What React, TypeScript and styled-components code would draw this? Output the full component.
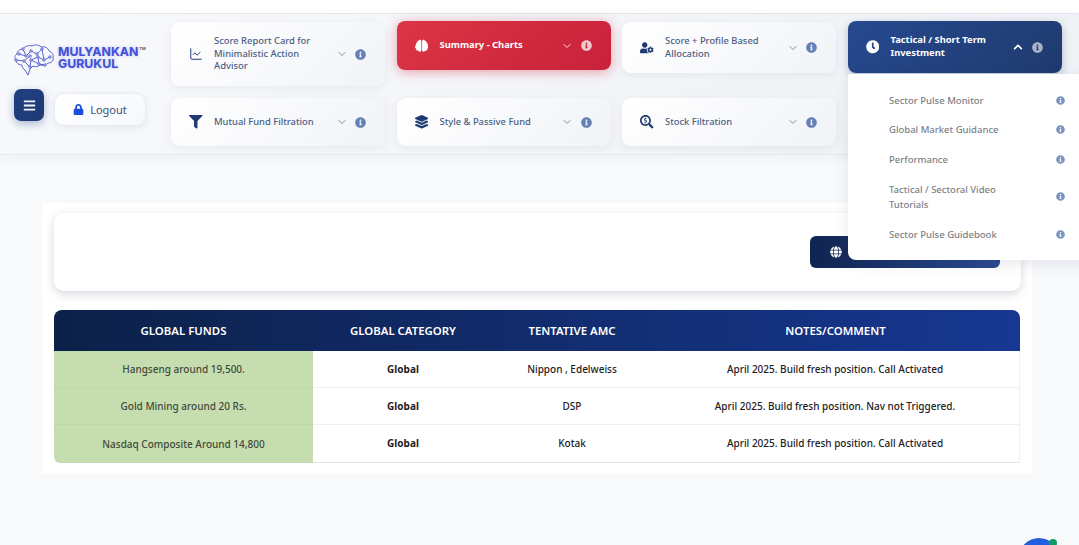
import React from "react";
import styled, { createGlobalStyle } from "styled-components";
import {
  FaBars, FaBrain, FaChevronUp, FaClock, FaFilter, FaGlobe, FaInfoCircle,
  FaLayerGroup, FaLock, FaSearchDollar, FaUserCog,
} from "react-icons/fa";
import { ChevronDown, ChartLine } from "lucide-react";

const Global = createGlobalStyle`
  html, body { margin: 0; padding: 0; height: 545px; overflow: hidden; background: #f8f9fb; }
  body { font-family: "Noto Sans", "Open Sans", sans-serif; }
  * { box-sizing: border-box; }
`;

const Page = styled.div`
  position: relative;
  width: 1079px;
  height: 545px;
  overflow: hidden;
  background: #f8f9fb;
`;
const TopStrip = styled.div`height: 14px; background: #fff; border-bottom: 1px solid #e4e7eb;`;
const Header = styled.header`
  height: 141px;
  padding: 8px 0 0 14px;
  display: flex;
  background: linear-gradient(135deg, #f8f9fc 0%, #eef1f5 100%);
  border-bottom: 1px solid #e6e8ec;
  box-shadow: 0 3px 10px rgba(30, 50, 90, 0.05);
`;
const Brand = styled.div`width: 157px; flex: none; display: flex; flex-direction: column;`;
const Logo = styled.div`display: flex; align-items: center; height: 36px; margin-top: 18px;`;
const LogoText = styled.div`
  margin-left: 2px;
  font-family: Inter, "Noto Sans", sans-serif;
  font-weight: 700;
  font-size: 12.3px;
  line-height: 12.5px;
  color: #4150d8;
  text-shadow: 0 0 3px rgba(65, 80, 216, .35);
`;
const LogoLine = styled.div`display: flex; align-items: flex-start;`;
const Tm = styled.span`
  margin-left: 1px;
  font-size: 4px;
  line-height: 5px;
  color: #555;
  text-shadow: none;
`;
const BrandActions = styled.div`display: flex; align-items: flex-start; gap: 10px; margin-top: 13px;`;
const MenuBtn = styled.button`
  width: 30px;
  height: 32px;
  border: 0;
  padding: 0;
  border-radius: 7px;
  background: linear-gradient(135deg, #1f4083, #1e3a72);
  color: #f2f5fb;
  display: flex;
  align-items: center;
  justify-content: center;
  font-size: 13px;
  box-shadow: 0 3px 8px rgba(30, 60, 130, .35);
`;
const LogoutBtn = styled.button`
  width: 92px;
  height: 33px;
  margin-top: 4px;
  border: 1px solid #e9ecf2;
  border-radius: 10px;
  background: linear-gradient(135deg, #fff, #f6f8fc);
  color: #3c4f77;
  font: 400 11px "Noto Sans", sans-serif;
  display: flex;
  align-items: center;
  justify-content: center;
  gap: 6px;
  box-shadow: 0 2px 6px rgba(30, 50, 90, .08);
  svg { color: #1d4ed8; font-size: 11px; }
`;
const Nav = styled.nav`
  display: grid;
  grid-template-columns: repeat(4, 214px);
  grid-template-rows: 64px 48px;
  column-gap: 11.5px;
  row-gap: 12px;
  align-items: start;
  position: relative;
`;
type Tone = "plain" | "red" | "blue";
const Card = styled.div<{ $tone: Tone; $h: number; $up?: number }>`
  height: ${p => p.$h}px;
  margin-top: ${p => (p.$up ? -p.$up : 0)}px;
  padding: 0 19px 0 18px;
  display: flex;
  align-items: center;
  border-radius: ${p => (p.$tone === "plain" ? 9 : 8)}px;
  font-size: 9.4px;
  line-height: 12.8px;
  background: ${p => p.$tone === "red" ? "linear-gradient(135deg, #dc3545, #c8213a)"
    : p.$tone === "blue" ? "linear-gradient(135deg, #27498f, #1e3a6e)"
    : "linear-gradient(135deg, #ffffff, #f1f3f7)"};
  color: ${p => (p.$tone === "plain" ? "#4a5f85" : "#fff")};
  font-weight: ${p => (p.$tone === "plain" ? 500 : 700)};
  box-shadow: ${p => p.$tone === "red" ? "0 2px 12px rgba(220, 53, 69, .45)"
    : p.$tone === "blue" ? "0 3px 8px rgba(30, 58, 110, .3)"
    : "0 2px 8px rgba(40, 60, 100, .07)"};
`;
const CardIcon = styled.span<{ $tone: Tone }>`
  width: 25px;
  flex: none;
  font-size: 13.5px;
  display: flex;
  color: ${p => (p.$tone === "plain" ? "#1e3a72" : "#fff")};
`;
const CardLabel = styled.span`flex: 1; min-width: 0; padding-right: 4px;`;
const Chevron = styled.span<{ $tone: Tone }>`
  width: 13px;
  margin-right: 7px;
  flex: none;
  display: flex;
  justify-content: center;
  color: ${p => (p.$tone === "plain" ? "#647391" : "#fff")};
`;
const Info = styled.span<{ $tone: Tone }>`
  flex: none;
  display: flex;
  font-size: 11px;
  color: ${p => p.$tone === "plain" ? "#6480b4" : p.$tone === "red" ? "#f4c9cd" : "#a9b4c9"};
`;
const Dropdown = styled.div`
  position: absolute;
  left: 677px;
  top: 52px;
  width: 240px;
  height: 186px;
  padding: 11.5px 0 0;
  background: #fff;
  border-radius: 0 0 0 8px;
  box-shadow: 0 4px 14px rgba(30, 50, 90, .1);
  z-index: 5;
`;
const DropItem = styled.div<{ $tall?: boolean }>`
  height: ${p => (p.$tall ? 45 : 29.6)}px;
  padding: 0 23px 0 41px;
  display: flex;
  align-items: center;
  font-size: 9.5px;
  line-height: 15px;
  color: #7b7f88;
  font-weight: 500;
`;
const DropLabel = styled.span`flex: 1; max-width: 135px; margin-right: auto;`;
const DropInfo = styled.span`
  display: flex;
  font-size: 9px;
  color: #7c94c0;
`;
const Main = styled.main`
  width: 990px;
  height: 271px;
  margin: 48px 0 0 42px;
  padding: 10px 11px 0 12px;
  background: #fff;
`;
const Toolbar = styled.div`
  height: 78px;
  border-radius: 10px;
  background: #fff;
  box-shadow: 0 3px 10px rgba(30, 40, 70, .18);
  display: flex;
  justify-content: flex-end;
  align-items: center;
  padding: 0 21px 0 0;
  margin-bottom: 19px;
`;
const GlobalBtn = styled.button`
  width: 190px;
  height: 32px;
  border: 0;
  border-radius: 6px;
  background: linear-gradient(90deg, #0f2450, #2c4a94);
  color: #fff;
  display: flex;
  align-items: center;
  padding: 0 0 0 20px;
  font-size: 12px;
`;
const TableWrap = styled.table`
  width: 966px;
  border-collapse: separate;
  border-spacing: 0;
  table-layout: fixed;
  font-size: 10px;
`;
const Head = styled.thead`
  tr { background: linear-gradient(90deg, #0c2148, #173792); }
`;
const Th = styled.th<{ $w: number }>`
  width: ${p => p.$w}px;
  height: 41px;
  padding: 0;
  color: #fff;
  font-size: 11.4px;
  font-weight: 600;
  text-align: center;
  &:first-child { border-top-left-radius: 8px; }
  &:last-child { border-top-right-radius: 8px; }
`;
const Row = styled.tr<{ $h: number }>`height: ${p => p.$h}px;`;
const Fund = styled.td`
  padding: 0;
  text-align: center;
  background: #c6deaf;
  color: #3f4a3c;
  font-weight: 500;
  border-bottom: 1px solid #bdd6a6;
  tr:last-child & { border-bottom: 0; border-bottom-left-radius: 6px; padding-bottom: 1px; }
`;
const Cell = styled.td<{ $bold?: boolean }>`
  padding: 0;
  text-align: center;
  color: #1f2126;
  font-weight: ${p => (p.$bold ? 700 : 500)};
  border-bottom: 1px solid #eef0f3;
  tr:last-child & { border-bottom-color: #e3e5ea; padding-bottom: 1px; }
  &:last-child { border-right: 1px solid #eef0f3; }
`;
const Chat = styled.div`
  position: absolute;
  left: 1019px;
  top: 538px;
  width: 40px;
  height: 40px;
  border-radius: 50%;
  background: #1f5fe0;
`;
const ChatDot = styled.div`
  position: absolute;
  left: 30px;
  top: 1px;
  width: 8px;
  height: 8px;
  border-radius: 50%;
  background: #129a63;
`;

const BrainLogo = () => (
  <svg width="42" height="33" viewBox="0 0 42 33" fill="none" stroke="#4a55c8" strokeWidth="0.9">
    <path d="M8 23c-3 0-6-2-6-5-2-2-1-5 1-6 0-3 3-5 6-5 2-3 6-4 9-3 3-2 7-1 9 1 4-1 7 1 8 4 3 1 5 4 4 7 1 3-2 5-5 5-2 2-5 3-8 2-2 2-5 2-7 1l-3 3-2 6-3-5c-2-1-3-3-3-5z" />
    <path d="M5 12l7 2 5-5 6 3 5-5M2 18l8 1 6-5M10 19l6 6M16 25l1-7 7-3 6 3 6-3M24 15l1 7 6 1M17 18l8 4M9 7l3 7M28 7l2 11" />
    {[[5,12],[12,14],[17,9],[23,12],[28,7],[2,18],[10,19],[16,14],[16,25],[17,18],[24,15],[30,18],[36,15],[25,22],[31,23],[9,7]].map(([x,y]) => (
      <circle key={`${x}-${y}`} cx={x} cy={y} r="1.2" fill="#f4f6fa" />
    ))}
  </svg>
);

const rowOne = [
  { icon: <ChartLine size={14} strokeWidth={1.7} />, label: "Score Report Card for Minimalistic Action Advisor", tone: "plain" as Tone, h: 64 },
  { icon: <FaBrain />, label: "Summary - Charts", tone: "red" as Tone, h: 49, up: 1 },
  { icon: <FaUserCog />, label: "Score + Profile Based Allocation", tone: "plain" as Tone, h: 51 },
  { icon: <FaClock />, label: "Tactical / Short Term Investment", tone: "blue" as Tone, h: 52, up: 1, open: true },
];
const rowTwo = [
  { icon: <FaFilter />, label: "Mutual Fund Filtration", tone: "plain" as Tone, h: 48 },
  { icon: <FaLayerGroup />, label: "Style & Passive Fund", tone: "plain" as Tone, h: 48 },
  { icon: <FaSearchDollar />, label: "Stock Filtration", tone: "plain" as Tone, h: 48 },
];
const menu = [
  { label: "Sector Pulse Monitor" },
  { label: "Global Market Guidance" },
  { label: "Performance" },
  { label: "Tactical / Sectoral Video Tutorials", tall: true },
  { label: "Sector Pulse Guidebook" },
];
const rows = [
  { fund: "Hangseng around 19,500.", amc: "Nippon , Edelweiss", note: "April 2025. Build fresh position. Call Activated", h: 37 },
  { fund: "Gold Mining around 20 Rs.", amc: "DSP", note: "April 2025. Build fresh position. Nav not Triggered.", h: 37 },
  { fund: "Nasdaq Composite Around 14,800", amc: "Kotak", note: "April 2025. Build fresh position. Call Activated", h: 38 },
];

type NavItem = { icon: React.ReactNode; label: string; tone: Tone; h: number; up?: number; open?: boolean };
const NavCard = ({ item }: { item: NavItem }) => (
  <Card $tone={item.tone} $h={item.h} $up={item.up}>
    <CardIcon $tone={item.tone}>{item.icon}</CardIcon>
    <CardLabel>{item.label}</CardLabel>
    <Chevron $tone={item.tone}>
      {item.open ? <FaChevronUp size={10} /> : <ChevronDown size={12} strokeWidth={1.6} />}
    </Chevron>
    <Info $tone={item.tone}><FaInfoCircle /></Info>
  </Card>
);

export default function App() {
  return (
    <Page>
      <Global />
      <TopStrip />
      <Header>
        <Brand>
          <Logo>
            <BrainLogo />
            <LogoText>
              <LogoLine>MULYANKAN<Tm>TM</Tm></LogoLine>
              <LogoLine>GURUKUL</LogoLine>
            </LogoText>
          </Logo>
          <BrandActions>
            <MenuBtn aria-label="Menu"><FaBars /></MenuBtn>
            <LogoutBtn><FaLock />Logout</LogoutBtn>
          </BrandActions>
        </Brand>
        <Nav>
          {rowOne.map(i => <NavCard key={i.label} item={i} />)}
          {rowTwo.map(i => <NavCard key={i.label} item={i} />)}
          <Dropdown>
            {menu.map(m => (
              <DropItem key={m.label} $tall={m.tall}>
                <DropLabel>{m.label}</DropLabel>
                <DropInfo><FaInfoCircle /></DropInfo>
              </DropItem>
            ))}
          </Dropdown>
        </Nav>
      </Header>
      <Main>
        <Toolbar>
          <GlobalBtn aria-label="Global"><FaGlobe /></GlobalBtn>
        </Toolbar>
        <TableWrap>
          <Head>
            <tr>
              <Th $w={259}>GLOBAL FUNDS</Th>
              <Th $w={180}>GLOBAL CATEGORY</Th>
              <Th $w={158}>TENTATIVE AMC</Th>
              <Th $w={369}>NOTES/COMMENT</Th>
            </tr>
          </Head>
          <tbody>
            {rows.map(r => (
              <Row key={r.fund} $h={r.h}>
                <Fund>{r.fund}</Fund>
                <Cell $bold>Global</Cell>
                <Cell>{r.amc}</Cell>
                <Cell>{r.note}</Cell>
              </Row>
            ))}
          </tbody>
        </TableWrap>
      </Main>
      <Chat><ChatDot /></Chat>
    </Page>
  );
}
